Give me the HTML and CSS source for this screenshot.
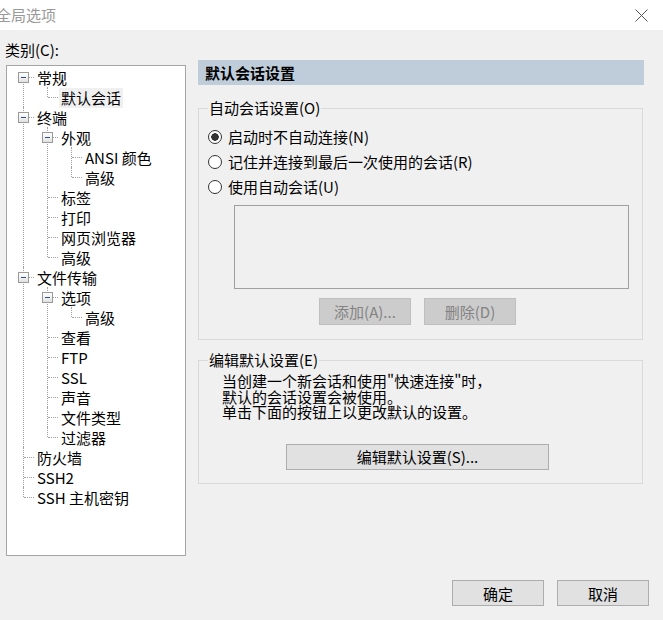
FILE: index.html
```html
<!DOCTYPE html>
<html lang="zh-CN">
<head>
    <meta charset="UTF-8">
    <title>全局选项</title>
    <link rel="stylesheet" href="styles.css">
</head>
<body>
    <div class="titlebar">
        <span class="title">全局选项</span>
        <svg class="close" width="13" height="13" viewBox="0 0 13 13">
            <path d="M0.5 0.5 L12.5 12.5 M12.5 0.5 L0.5 12.5" stroke="#555" stroke-width="1" fill="none"/>
        </svg>
    </div>

    <div class="main">
        <!-- 类别 -->
        <div class="category">
            <div class="cat-label">类别(C):</div>
            <div class="tree-box">
                <ul class="tree">
                    <li class="first">
                        <div class="row"><span class="exp"></span><span class="label">常规</span></div>
                        <ul>
                            <li class="last"><div class="row"><span class="label selected">默认会话</span></div></li>
                        </ul>
                    </li>
                    <li>
                        <div class="row"><span class="exp"></span><span class="label">终端</span></div>
                        <ul>
                            <li>
                                <div class="row"><span class="exp"></span><span class="label">外观</span></div>
                                <ul>
                                    <li><div class="row"><span class="label">ANSI 颜色</span></div></li>
                                    <li class="last"><div class="row"><span class="label">高级</span></div></li>
                                </ul>
                            </li>
                            <li><div class="row"><span class="label">标签</span></div></li>
                            <li><div class="row"><span class="label">打印</span></div></li>
                            <li><div class="row"><span class="label">网页浏览器</span></div></li>
                            <li class="last"><div class="row"><span class="label">高级</span></div></li>
                        </ul>
                    </li>
                    <li>
                        <div class="row"><span class="exp"></span><span class="label">文件传输</span></div>
                        <ul>
                            <li>
                                <div class="row"><span class="exp"></span><span class="label">选项</span></div>
                                <ul>
                                    <li class="last"><div class="row"><span class="label">高级</span></div></li>
                                </ul>
                            </li>
                            <li><div class="row"><span class="label">查看</span></div></li>
                            <li><div class="row"><span class="label">FTP</span></div></li>
                            <li><div class="row"><span class="label">SSL</span></div></li>
                            <li><div class="row"><span class="label">声音</span></div></li>
                            <li><div class="row"><span class="label">文件类型</span></div></li>
                            <li class="last"><div class="row"><span class="label">过滤器</span></div></li>
                        </ul>
                    </li>
                    <li><div class="row"><span class="label">防火墙</span></div></li>
                    <li><div class="row"><span class="label">SSH2</span></div></li>
                    <li class="last"><div class="row"><span class="label">SSH 主机密钥</span></div></li>
                </ul>
            </div>
        </div>

        <!-- 默认会话设置 -->
        <div class="panel">
            <div class="panel-head">默认会话设置</div>

            <fieldset class="group auto-group">
                <legend>自动会话设置(O)</legend>
                <label class="radio-row"><input type="radio" name="auto" checked> 启动时不自动连接(N)</label>
                <label class="radio-row"><input type="radio" name="auto"> 记住并连接到最后一次使用的会话(R)</label>
                <label class="radio-row"><input type="radio" name="auto"> 使用自动会话(U)</label>
                <div class="listbox"></div>
                <div class="list-buttons">
                    <button class="btn" disabled>添加(A)...</button>
                    <button class="btn" disabled>删除(D)</button>
                </div>
            </fieldset>

            <fieldset class="group edit-group">
                <legend>编辑默认设置(E)</legend>
                <p class="desc">当创建一个新会话和使用"快速连接"时，<br>默认的会话设置会被使用。<br>单击下面的按钮上以更改默认的设置。</p>
                <button class="btn wide">编辑默认设置(S)...</button>
            </fieldset>
        </div>
    </div>

    <div class="footer">
        <button class="btn">确定</button>
        <button class="btn">取消</button>
    </div>
</body>
</html>
```

FILE: styles.css
```css
body {
    margin: 0;
    width: 663px;
    height: 620px;
    overflow: hidden;
    background-color: #f0f0f0;
    font-family: "Noto Sans CJK SC", "Noto Sans", sans-serif;
    font-size: 15px;
    color: #000;
}
.titlebar {
    height: 30px;
    background-color: #fff;
    display: flex;
    align-items: center;
    justify-content: space-between;
    padding-right: 15px;
}
.title {
    margin-left: -4px;
    color: #999;
    line-height: 30px;
}
.close {
    display: block;
    margin-top: 1px;
}
.main {
    display: flex;
    gap: 12px;
    padding-left: 6px;
}
.cat-label {
    margin: 10px 0 0 -1px;
    line-height: 20px;
}
.tree-box {
    margin-top: 5px;
    width: 180px;
    height: 491px;
    box-sizing: border-box;
    border: 1px solid #a5a5a5;
    background-color: #fff;
    overflow: hidden;
}

/* 树形控件 */
.tree, .tree ul {
    list-style: none;
    margin: 0;
    padding: 0;
}
.tree {
    padding-top: 1px;
}
.tree ul {
    padding-left: 24px;
}
.tree li {
    position: relative;
}
.tree li::before {
    content: "";
    position: absolute;
    left: 16px;
    top: 0;
    bottom: 0;
    border-left: 1px dotted #a0a0a0;
}
.tree li.first::before {
    top: 10px;
}
.tree li.last::before {
    bottom: auto;
    height: 10px;
}
.row {
    position: relative;
    height: 20px;
    padding-left: 28px;
}
.row::before {
    content: "";
    position: absolute;
    left: 17px;
    top: 10px;
    width: 10px;
    border-top: 1px dotted #a0a0a0;
}
.exp {
    position: absolute;
    left: 11px;
    top: 5px;
    width: 11px;
    height: 11px;
    box-sizing: border-box;
    border: 1px solid #9a9a9a;
    background: linear-gradient(#ffffff, #e2e2e2);
    z-index: 1;
}
.exp::after {
    content: "";
    position: absolute;
    left: 2px;
    top: 4px;
    width: 5px;
    height: 1px;
    background-color: #30508c;
}
.label {
    display: inline-block;
    padding: 0 2px;
    line-height: 20px;
    white-space: nowrap;
    position: relative;
}
.label.selected {
    background-color: #f0f0f0;
}

/* 右侧面板 */
.panel {
    width: 446px;
    margin-top: 30px;
}
.panel-head {
    height: 25px;
    line-height: 25px;
    padding-left: 7px;
    background-color: #bfcddb;
    font-weight: bold;
}
.group {
    margin: 14px 1px 0 0;
    padding: 7px 13px 14px 9px;
    border: 1px solid #d9d9d9;
    min-width: 0;
}
.group legend {
    padding: 0 1px;
    line-height: 18px;
}
.radio-row {
    display: flex;
    align-items: center;
    height: 25px;
    gap: 6px;
    white-space: nowrap;
}
.radio-row input {
    appearance: none;
    margin: 0;
    width: 14px;
    height: 14px;
    border: 1px solid #333;
    border-radius: 50%;
    background: #fff;
}
.radio-row input:checked {
    background: radial-gradient(circle, #333 0 3.5px, #fff 4px);
}
.listbox {
    margin: 6px 0 0 26px;
    height: 84px;
    box-sizing: border-box;
    border: 1px solid #a0a0a0;
    background-color: #f0f0f0;
}
.list-buttons {
    display: flex;
    gap: 13px;
    margin: 9px 0 0 111px;
}
.btn {
    width: 92px;
    height: 27px;
    padding: 0;
    font-family: inherit;
    font-size: 15px;
    color: #000;
    background-color: #e1e1e1;
    border: 1px solid #adadad;
}
.btn:disabled {
    background-color: #cccccc;
    border-color: #bfbfbf;
    color: #838383;
}
.edit-group {
    margin-top: 11px;
    padding: 4px 13px 13px 9px;
}
.desc {
    margin: 0 0 0 14px;
    line-height: 15.5px;
}
.btn.wide {
    display: block;
    margin: 24px 0 0 78px;
    width: 263px;
    height: 26px;
}
.footer {
    display: flex;
    justify-content: flex-end;
    gap: 13px;
    padding-right: 14px;
    margin-top: 24px;
}
.footer .btn {
    height: 26px;
}
```
